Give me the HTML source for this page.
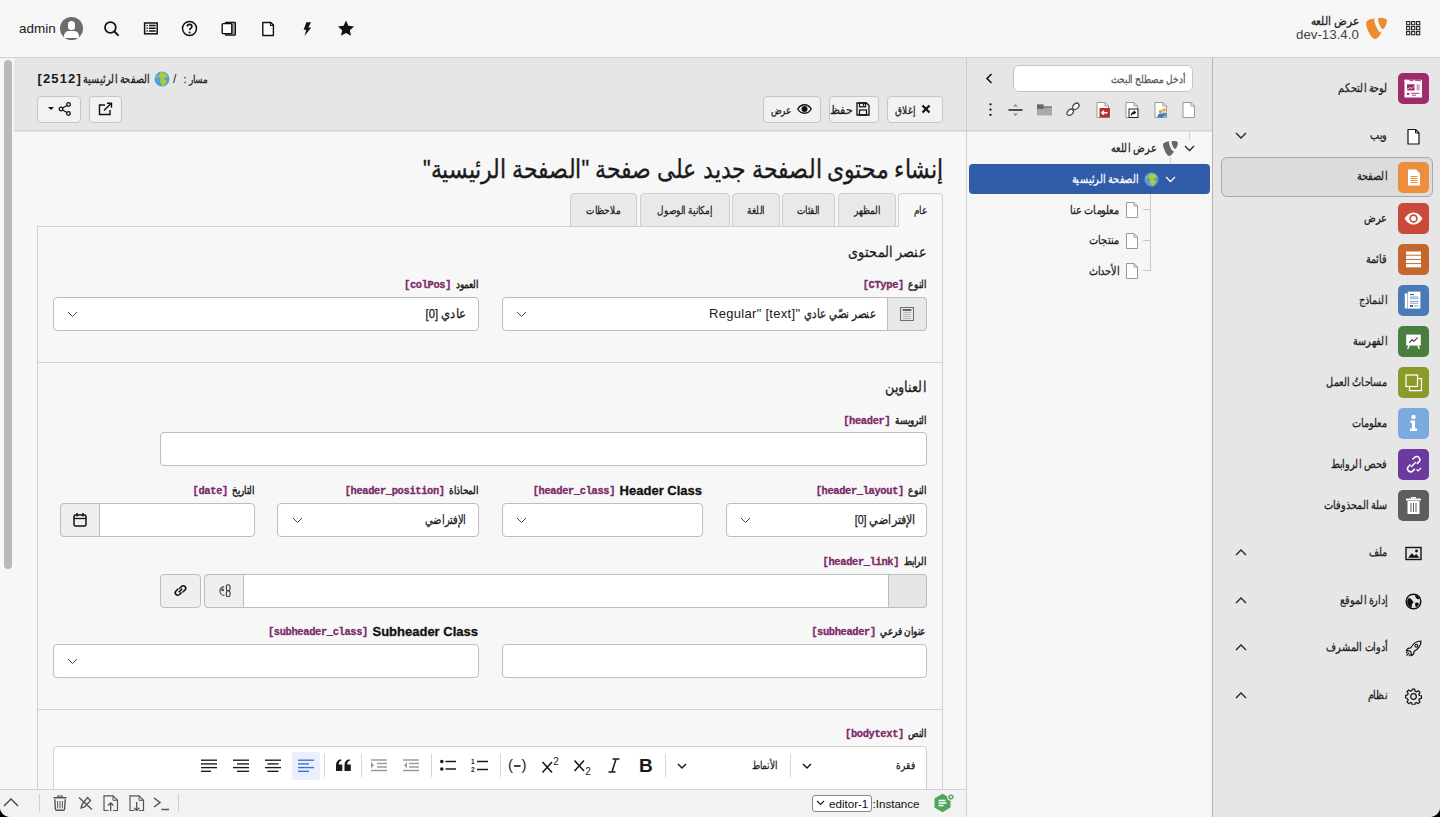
<!DOCTYPE html>
<html lang="ar" dir="rtl">
<head>
<meta charset="utf-8">
<style>
*{box-sizing:border-box;margin:0;padding:0}
html,body{width:1440px;height:817px;overflow:hidden;background:#000;font-family:"Liberation Sans",sans-serif;color:#1a1a1a}
#app{position:absolute;left:0;top:0;width:1440px;height:817px;background:#f7f7f7;border-radius:0 0 10px 10px;overflow:hidden}
.a{position:absolute}
svg{display:block;direction:ltr}
.t{white-space:nowrap;transform-origin:100% 50%;-webkit-text-stroke-width:.25px}
.tl{white-space:nowrap;direction:ltr}
</style>
</head>
<body>
<div id="app">
<div class="a" style="left:0px;top:0px;width:1440px;height:57px;background:#f6f6f6"></div>
<div class="a" style="left:0px;top:57px;width:1440px;height:1px;background:#d4d4d4"></div>
<div class="a" style="left:0px;top:58px;width:1440px;height:1px;background:rgba(0,0,0,.04)"></div>
<div class="a" style="left:1212px;top:58px;width:228px;height:759px;background:#e6e6e6"></div>
<div class="a" style="left:1212px;top:58px;width:1px;height:759px;background:#b4b4b4"></div>
<div class="a" style="left:967px;top:58px;width:245px;height:759px;background:#f6f6f6"></div>
<div class="a" style="left:967px;top:58px;width:245px;height:72px;background:#e6e6e6"></div>
<div class="a" style="left:967px;top:130px;width:245px;height:1px;background:#d3d3d3"></div>
<div class="a" style="left:967px;top:131px;width:245px;height:1px;background:#e2e2e2"></div>
<div class="a" style="left:966px;top:58px;width:1px;height:759px;background:#d0d0d0"></div>
<div class="a" style="left:14px;top:58px;width:952px;height:72px;background:#e6e6e6"></div>
<div class="a" style="left:14px;top:130px;width:952px;height:1px;background:#d3d3d3"></div>
<div class="a" style="left:14px;top:131px;width:952px;height:1px;background:#e2e2e2"></div>
<div class="a tl" style="left:19px;top:20.0px;line-height:18px;font-size:13.5px;font-weight:normal;color:#1a1a1a;">admin</div>
<div class="a" style="left:60px;top:17px;width:23px;height:23px;border-radius:50%;background:#6b6b6b;overflow:hidden"><div class="a" style="left:8px;top:4px;width:7px;height:9px;border-radius:3.5px 3.5px 3px 3px;background:#fff"></div><div class="a" style="left:4px;top:13.5px;width:15px;height:7px;border-radius:5px 5px 0 0;background:#fff"></div></div>
<svg class="a" style="left:103px;top:20px;" width="17" height="17" viewBox="0 0 17 17"><circle cx="7.4" cy="7.5" r="5.4" fill="none" stroke="#111" stroke-width="1.7"/><path d="M11.3 11.4L15 15.1" stroke="#111" stroke-width="2" stroke-linecap="round"/></svg>
<svg class="a" style="left:143px;top:22px;" width="16" height="13" viewBox="0 0 16 13"><rect x="1.6" y="1" width="12.6" height="10.8" fill="none" stroke="#111" stroke-width="1.5"/><path d="M3.5 3.6h1.2M3.5 6.3h1.2M3.5 9h1.2" stroke="#111" stroke-width="1.4"/><path d="M6 3.6h6.6M6 6.3h6.6M6 9h6.6" stroke="#111" stroke-width="1.5"/></svg>
<svg class="a" style="left:181px;top:20px;" width="17" height="17" viewBox="0 0 17 17"><circle cx="8.5" cy="8.5" r="7" fill="none" stroke="#111" stroke-width="1.5"/><path d="M6.3 6.6c0-1.4 1-2.3 2.3-2.3s2.3.9 2.3 2.1c0 1.6-2.2 1.8-2.2 3.6" fill="none" stroke="#111" stroke-width="1.7"/><circle cx="8.6" cy="12.6" r="1" fill="#111"/></svg>
<svg class="a" style="left:221px;top:21px;" width="16" height="16" viewBox="0 0 16 16"><rect x="4.4" y="1.4" width="10" height="12.8" rx=".8" fill="#9a9a9a" stroke="#111" stroke-width="1.2"/><rect x="1.2" y="2.6" width="9.6" height="10" rx=".8" fill="#fff" stroke="#111" stroke-width="1.4"/></svg>
<svg class="a" style="left:260px;top:21px;" width="16" height="16" viewBox="0 0 16 16"><path d="M2.8 1.5h8l2.6 2.6v10.4H2.8z" fill="#fff" stroke="#111" stroke-width="1.4" stroke-linejoin="round"/><path d="M10.5 1.5v3h3" fill="none" stroke="#111" stroke-width="1.1"/></svg>
<svg class="a" style="left:299px;top:21px;" width="16" height="16" viewBox="0 0 16 16"><path d="M7.4 1.2h4.6L9.3 6.4h3l-6.8 8.6 1.8-6.3H4.6z" fill="#111"/></svg>
<svg class="a" style="left:337px;top:20px;" width="18" height="17" viewBox="0 0 18 17"><path d="M9 .6l2.4 5.2 5.7.6-4.3 3.8 1.2 5.6L9 12.9l-5 2.9 1.2-5.6L.9 6.4l5.7-.6z" fill="#111"/></svg>
<div class="a t" style="right:81px;top:13.5px;line-height:14px;font-size:11.5px;font-weight:normal;color:#1a1a1a;transform:scaleX(0.88);">عرض اللعه</div>
<div class="a tl" style="left:1296px;top:27.0px;line-height:16px;font-size:13.3px;font-weight:normal;color:#444;">dev-13.4.0</div>
<svg class="a" style="left:1366px;top:18px;" width="21" height="21" viewBox="0 0 24 24"><path d="M18.08 16.539c-.356.105-.64.144-1.012.144-3.048 0-7.524-10.652-7.524-14.197 0-1.305.31-1.74.745-2.114C6.56.808 2.082 2.177.651 3.917c-.31.436-.497 1.12-.497 1.99C.154 11.436 6.06 24 10.228 24c1.928 0 5.178-3.168 7.852-7.46M16.134.001c3.855 0 7.712.622 7.712 2.798 0 4.415-2.8 9.765-4.23 9.765-2.549 0-5.72-7.09-5.72-10.635C13.897.311 14.518 0 16.134 0" fill="#ee8b2b"/></svg>
<svg class="a" style="left:1406px;top:21px;" width="16" height="15" viewBox="0 0 16 15"><rect x="0.6" y="0.6" width="3.2" height="3.2" fill="none" stroke="#111" stroke-width="1"/><rect x="5.6" y="0.6" width="3.2" height="3.2" fill="none" stroke="#111" stroke-width="1"/><rect x="10.6" y="0.6" width="3.2" height="3.2" fill="none" stroke="#111" stroke-width="1"/><rect x="0.6" y="5.6" width="3.2" height="3.2" fill="none" stroke="#111" stroke-width="1"/><rect x="5.6" y="5.6" width="3.2" height="3.2" fill="none" stroke="#111" stroke-width="1"/><rect x="10.6" y="5.6" width="3.2" height="3.2" fill="none" stroke="#111" stroke-width="1"/><rect x="0.6" y="10.6" width="3.2" height="3.2" fill="none" stroke="#111" stroke-width="1"/><rect x="5.6" y="10.6" width="3.2" height="3.2" fill="none" stroke="#111" stroke-width="1"/><rect x="10.6" y="10.6" width="3.2" height="3.2" fill="none" stroke="#111" stroke-width="1"/></svg>
<div class="a" style="left:1221px;top:157px;width:212px;height:40px;border:1px solid #a9a9a9;border-radius:6px;background:#dcdcdc;box-sizing:border-box"></div>
<div class="a" style="left:1398px;top:73.0px;width:31px;height:31px;border-radius:5px;background:#9e2c6b"><svg width="31" height="31" viewBox="0 0 31 31"><rect x="6.5" y="6.8" width="17.5" height="17.7" fill="#fff"/><path d="M6.5 6.8h4.5v1.6H6.5z" fill="#fff"/><path d="M11.5 7.6h4M17 7.6h6" stroke="#9e2c6b" stroke-width=".9"/><rect x="9" y="11.3" width="7.5" height="6.2" fill="#9e2c6b"/><path d="M9 16.5l3-2 2 1 2.5-2.5" fill="none" stroke="#e9b8d2" stroke-width="1"/><rect x="18.5" y="11.3" width="3.2" height="6.2" fill="#d9a3c1"/><rect x="9" y="19.8" width="2.2" height="2.2" fill="#9e2c6b"/><path d="M13 20.3h8.5M14 22.2h4" stroke="#9e2c6b" stroke-width=".9"/></svg></div>
<div class="a t" style="right:53px;top:77.5px;line-height:20px;font-size:11.5px;font-weight:normal;color:#1a1a1a;transform:scaleX(0.81);">لوحة التحكم</div>
<div class="a" style="left:1398px;top:161.5px;width:31px;height:31px;border-radius:5px;background:#eb8f3f"><svg width="31" height="31" viewBox="0 0 31 31"><path d="M10 7.5h8l4 4v12H10z" fill="#fff"/><path d="M12.5 14.5h7M12.5 16.5h7M12.5 18.5h7M12.5 20.5h7" stroke="#eb8f3f" stroke-width="1"/></svg></div>
<div class="a t" style="right:53px;top:166.0px;line-height:20px;font-size:11.5px;font-weight:normal;color:#1a1a1a;transform:scaleX(0.81);">الصفحة</div>
<div class="a" style="left:1398px;top:203.0px;width:31px;height:31px;border-radius:5px;background:#c94a3a"><svg width="31" height="31" viewBox="0 0 31 31"><path d="M6.5 15.5c2.5-4 5.5-6 9-6s6.5 2 9 6c-2.5 4-5.5 6-9 6s-6.5-2-9-6z" fill="#fff"/><circle cx="15.5" cy="15.5" r="4.2" fill="#c94a3a"/><circle cx="15.5" cy="15.5" r="2.6" fill="#fff"/></svg></div>
<div class="a t" style="right:53px;top:207.5px;line-height:20px;font-size:11.5px;font-weight:normal;color:#1a1a1a;transform:scaleX(0.81);">عرض</div>
<div class="a" style="left:1398px;top:244.0px;width:31px;height:31px;border-radius:5px;background:#c4672f"><svg width="31" height="31" viewBox="0 0 31 31"><rect x="8" y="7.5" width="15" height="3.2" fill="#fff"/><rect x="8" y="11.7" width="15" height="3.2" fill="#fff"/><rect x="8" y="15.9" width="15" height="3.2" fill="#fff"/><rect x="8" y="20.1" width="15" height="3.2" fill="#fff"/></svg></div>
<div class="a t" style="right:53px;top:248.5px;line-height:20px;font-size:11.5px;font-weight:normal;color:#1a1a1a;transform:scaleX(0.81);">قائمة</div>
<div class="a" style="left:1398px;top:285.0px;width:31px;height:31px;border-radius:5px;background:#4a7bb6"><svg width="31" height="31" viewBox="0 0 31 31"><rect x="6.8" y="8.5" width="2.6" height="15" fill="#fff"/><rect x="9.8" y="6.6" width="12.6" height="17" fill="#fff"/><path d="M12 9.6h4" stroke="#2d4e7a" stroke-width="1"/><rect x="12" y="11.3" width="8.5" height="3" fill="#a9c4e4"/><path d="M12 16.4h8.5M12 18.2h8.5" stroke="#6b93c6" stroke-width=".8"/><rect x="12" y="20.1" width="3" height="1.7" fill="#2d4e7a"/><rect x="16" y="20.1" width="4.5" height="1.7" fill="#b9cfe8"/></svg></div>
<div class="a t" style="right:53px;top:289.5px;line-height:20px;font-size:11.5px;font-weight:normal;color:#1a1a1a;transform:scaleX(0.81);">النماذج</div>
<div class="a" style="left:1398px;top:326.0px;width:31px;height:31px;border-radius:5px;background:#4b7d3e"><svg width="31" height="31" viewBox="0 0 31 31"><rect x="8.2" y="8.6" width="14.6" height="11" fill="#fff"/><path d="M11.3 16.6l2.8-2.8 1.8 1.5 3.6-3.6" fill="none" stroke="#333" stroke-width="1.1"/><path d="M11.2 19.5l-1.6 3.4M19.8 19.5l1.6 3.4" stroke="#fff" stroke-width="1.3"/></svg></div>
<div class="a t" style="right:53px;top:330.5px;line-height:20px;font-size:11.5px;font-weight:normal;color:#1a1a1a;transform:scaleX(0.81);">الفهرسة</div>
<div class="a" style="left:1398px;top:367.0px;width:31px;height:31px;border-radius:5px;background:#8c9a2a"><svg width="31" height="31" viewBox="0 0 31 31"><rect x="8" y="8" width="11.5" height="11.5" fill="none" stroke="#fff" stroke-width="1.25"/><path d="M11.5 19.5v4h12v-12h-4" fill="none" stroke="#fff" stroke-width="1.25"/></svg></div>
<div class="a t" style="right:53px;top:371.5px;line-height:20px;font-size:11.5px;font-weight:normal;color:#1a1a1a;transform:scaleX(0.81);">مساحاتُ العمل</div>
<div class="a" style="left:1398px;top:408.0px;width:31px;height:31px;border-radius:5px;background:#7aaade"><svg width="31" height="31" viewBox="0 0 31 31"><circle cx="15.5" cy="9" r="2.2" fill="#fff"/><path d="M12.5 12.5h4.5v8h2v2.5h-7v-2.5h2v-5.5h-1.5z" fill="#fff"/></svg></div>
<div class="a t" style="right:53px;top:412.5px;line-height:20px;font-size:11.5px;font-weight:normal;color:#1a1a1a;transform:scaleX(0.81);">معلومات</div>
<div class="a" style="left:1398px;top:449.0px;width:31px;height:31px;border-radius:5px;background:#6b3a9f"><svg width="31" height="31" viewBox="0 0 31 31"><path d="M14.5 10.5l2-2c1.2-1.2 3.2-1.2 4.4 0s1.2 3.2 0 4.4l-2 2M12.5 15.5l-2 2c-1.2 1.2-1.2 3.2 0 4.4s3.2 1.2 4.4 0l2-2M13 18l5-5" fill="none" stroke="#fff" stroke-width="1.5"/><path d="M18.5 20.5l1.5 1.5 3-3" fill="none" stroke="#fff" stroke-width="1.2"/></svg></div>
<div class="a t" style="right:53px;top:453.5px;line-height:20px;font-size:11.5px;font-weight:normal;color:#1a1a1a;transform:scaleX(0.81);">فحص الروابط</div>
<div class="a" style="left:1398px;top:490.0px;width:31px;height:31px;border-radius:5px;background:#5b5e5c"><svg width="31" height="31" viewBox="0 0 31 31"><rect x="9.5" y="11" width="12" height="13" fill="#fff"/><rect x="8" y="8.5" width="15" height="2" fill="#fff"/><rect x="13" y="7" width="5" height="1.5" fill="#fff"/><path d="M13 13v9M15.5 13v9M18 13v9" stroke="#5b5e5c" stroke-width="1"/></svg></div>
<div class="a t" style="right:53px;top:494.5px;line-height:20px;font-size:11.5px;font-weight:normal;color:#1a1a1a;transform:scaleX(0.81);">سلة المحذوفات</div>
<svg class="a" style="left:1405px;top:127.5px;" width="17" height="17" viewBox="0 0 17 17"><path d="M3 1.5h7.5l3.5 3.5v11h-11z" fill="#fff" stroke="#111" stroke-width="1.2" stroke-linejoin="round"/><path d="M10.5 1.5V5h3.5" fill="none" stroke="#111" stroke-width="1"/></svg>
<div class="a t" style="right:53px;top:124.5px;line-height:20px;font-size:11.5px;font-weight:normal;color:#1a1a1a;transform:scaleX(0.81);">ويب</div>
<svg class="a" style="left:1235px;top:132px;" width="12" height="8" viewBox="0 0 12 8"><path d="M1 1l5 5 5-5" fill="none" stroke="#222" stroke-width="1.3"/></svg>
<svg class="a" style="left:1405px;top:544.5px;" width="17" height="17" viewBox="0 0 17 17"><rect x="1" y="2.5" width="15" height="12" fill="none" stroke="#111" stroke-width="1.4"/><path d="M3 12.8l3.8-4.6 2.6 2.6 1.8-1.8 3.3 3.8z" fill="#111"/><circle cx="11.5" cy="6" r="1.4" fill="#111"/></svg>
<div class="a t" style="right:53px;top:541.5px;line-height:20px;font-size:11.5px;font-weight:normal;color:#1a1a1a;transform:scaleX(0.81);">ملف</div>
<svg class="a" style="left:1235px;top:549px;" width="12" height="8" viewBox="0 0 12 8"><path d="M1 6l5-5 5 5" fill="none" stroke="#222" stroke-width="1.3"/></svg>
<svg class="a" style="left:1405px;top:592.5px;" width="17" height="17" viewBox="0 0 17 17"><circle cx="8.5" cy="8.5" r="7.3" fill="none" stroke="#111" stroke-width="1.5"/><path d="M3.2 5.5c1.5-.6 3 .2 3.5 1.3.6 1.2 2 1.3 1.6 2.8-.4 1.3-1.8 1.2-1.5 2.8.2 1.2-.2 2.3-.8 2.6C4.6 14 3.3 12.5 2.6 11 2 9.5 2 7.3 3.2 5.5zM10 2c1.8.4 3.8 1.7 4.6 3.8-1.1.8-2.6.5-3.3-.6-.6-.9-1.5-1.8-1.3-3.2zM10.5 9.5c1.3-.3 2.8.2 3.5 1.3-.5 1.6-1.6 2.8-3 3.5-.6-.8-1.3-2.6-.5-4.8z" fill="#111"/></svg>
<div class="a t" style="right:53px;top:589.5px;line-height:20px;font-size:11.5px;font-weight:normal;color:#1a1a1a;transform:scaleX(0.81);">إدارة الموقع</div>
<svg class="a" style="left:1235px;top:597px;" width="12" height="8" viewBox="0 0 12 8"><path d="M1 6l5-5 5 5" fill="none" stroke="#222" stroke-width="1.3"/></svg>
<svg class="a" style="left:1405px;top:639.5px;" width="17" height="17" viewBox="0 0 17 17"><path d="M16 1c-4.5 0-8 2.8-10.2 6.8l-2.8.6L1.3 10.6l3.4.3 1.4 1.4.3 3.4 2.2-1.7.6-2.8C13.2 9 16 5.5 16 1z" fill="none" stroke="#111" stroke-width="1.2" stroke-linejoin="round"/><circle cx="11.3" cy="5.7" r="1.4" fill="none" stroke="#111" stroke-width="1.1"/><path d="M4 13l-2.5 2.5M5.5 14.5l-1.5 1.5M2.5 11.5L1 13" stroke="#111" stroke-width="1.1"/></svg>
<div class="a t" style="right:53px;top:636.5px;line-height:20px;font-size:11.5px;font-weight:normal;color:#1a1a1a;transform:scaleX(0.81);">أدوات المشرف</div>
<svg class="a" style="left:1235px;top:644px;" width="12" height="8" viewBox="0 0 12 8"><path d="M1 6l5-5 5 5" fill="none" stroke="#222" stroke-width="1.3"/></svg>
<svg class="a" style="left:1405px;top:687.5px;" width="17" height="17" viewBox="0 0 17 17"><path d="M7.3 1.2h2.4l.45 2.1 1.35.55 1.8-1.2 1.7 1.7-1.2 1.8.55 1.35 2.1.45v2.4l-2.1.45-.55 1.35 1.2 1.8-1.7 1.7-1.8-1.2-1.35.55-.45 2.1H7.3l-.45-2.1-1.35-.55-1.8 1.2-1.7-1.7 1.2-1.8-.55-1.35L.55 9.7V7.3l2.1-.45.55-1.35-1.2-1.8 1.7-1.7 1.8 1.2 1.35-.55z" fill="none" stroke="#111" stroke-width="1.2" stroke-linejoin="round"/><circle cx="8.5" cy="8.5" r="2.8" fill="none" stroke="#111" stroke-width="1.2"/></svg>
<div class="a t" style="right:53px;top:684.5px;line-height:20px;font-size:11.5px;font-weight:normal;color:#1a1a1a;transform:scaleX(0.81);">نظام</div>
<svg class="a" style="left:1235px;top:692px;" width="12" height="8" viewBox="0 0 12 8"><path d="M1 6l5-5 5 5" fill="none" stroke="#222" stroke-width="1.3"/></svg>
<div class="a" style="left:1013px;top:64.5px;width:180px;height:27.5px;background:#fff;border:1px solid #c4c4c4;border-radius:6px;box-sizing:border-box"></div>
<div class="a t" style="right:255px;top:68.5px;line-height:20px;font-size:11px;font-weight:normal;color:#555;transform:scaleX(0.81);">أدخل مصطلح البحث</div>
<svg class="a" style="left:985px;top:73px;" width="8" height="11" viewBox="0 0 8 11"><path d="M6.5 1L2 5.5 6.5 10" fill="none" stroke="#111" stroke-width="1.6"/></svg>
<svg class="a" style="left:988px;top:102px;" width="5" height="15" viewBox="0 0 5 15"><circle cx="2.5" cy="2.3" r="1.15" fill="#111"/><circle cx="2.5" cy="7.6" r="1.15" fill="#111"/><circle cx="2.5" cy="12.9" r="1.15" fill="#111"/></svg>
<svg class="a" style="left:1008px;top:102px;" width="15" height="16" viewBox="0 0 15 16"><path d="M.5 8h14" stroke="#333" stroke-width="1.7"/><path d="M5 4.5L7.5 2 10 4.5zM5 11.5l2.5 2.5 2.5-2.5z" fill="#888"/></svg>
<svg class="a" style="left:1037px;top:104px;" width="16" height="12" viewBox="0 0 16 12"><rect x="0" y="2.6" width="15" height="8.9" fill="#a9a9a9"/><rect x="0" y="0.3" width="6.6" height="4.7" fill="#6e6e6e"/><path d="M0 3h15" stroke="#5e5e5e" stroke-width="1"/></svg>
<svg class="a" style="left:1066px;top:102px;" width="15" height="15" viewBox="0 0 15 15"><ellipse cx="4.2" cy="10.3" rx="3.6" ry="2.6" transform="rotate(-45 4.2 10.3)" fill="#fff" stroke="#444" stroke-width="1.3"/><ellipse cx="9.8" cy="4.3" rx="3.6" ry="2.6" transform="rotate(-45 9.8 4.3)" fill="#fff" stroke="#444" stroke-width="1.3"/></svg>
<svg class="a" style="left:1096px;top:102px;" width="14" height="16" viewBox="0 0 14 16"><path d="M1 .5h8l3.5 3.5v11.5H1z" fill="#fff" stroke="#999" stroke-width="1"/><path d="M9 .5V4h3.5" fill="none" stroke="#999" stroke-width="1"/><rect x="3.5" y="6" width="10.5" height="9.5" fill="#c0302a"/><path d="M5.5 10.7h6M5.5 10.7l2.5-2M5.5 10.7l2.5 2" stroke="#fff" stroke-width="1.4"/></svg>
<svg class="a" style="left:1125px;top:102px;" width="14" height="16" viewBox="0 0 14 16"><path d="M1 .5h8l3.5 3.5v11.5H1z" fill="#fff" stroke="#999" stroke-width="1"/><path d="M9 .5V4h3.5" fill="none" stroke="#999" stroke-width="1"/><rect x="4" y="7" width="9" height="8.5" fill="#fff" stroke="#222" stroke-width="1"/><path d="M6.5 13.5c0-2 1-3 3-3M8.5 9l1.8 1.5-1.8 1.5" fill="none" stroke="#111" stroke-width="1.3"/></svg>
<svg class="a" style="left:1154px;top:102px;" width="14" height="16" viewBox="0 0 14 16"><path d="M1 .5h8l3.5 3.5v11.5H1z" fill="#fff" stroke="#999" stroke-width="1"/><path d="M9 .5V4h3.5" fill="none" stroke="#999" stroke-width="1"/><circle cx="10" cy="8" r="1.8" fill="#e2a33b"/><path d="M7 14.5c0-2.5 1.2-4 3-4s3 1.5 3 4z" fill="#4a8fd4"/><circle cx="6.5" cy="9.5" r="1.8" fill="#e2a33b"/><path d="M3.5 15.5c0-2.5 1.2-4 3-4s3 1.5 3 4z" fill="#3b7ac0"/></svg>
<svg class="a" style="left:1182px;top:102px;" width="14" height="16" viewBox="0 0 14 16"><path d="M1 .5h8l3.5 3.5v11.5H1z" fill="#fff" stroke="#999" stroke-width="1"/><path d="M9 .5V4h3.5" fill="none" stroke="#999" stroke-width="1"/></svg>
<div class="a" style="left:1189px;top:131px;width:1px;height:9px;background:#d0d0d0"></div>
<div class="a" style="left:1150px;top:194px;width:1px;height:77px;background:#c9c9c9"></div>
<div class="a" style="left:1143px;top:209px;width:8px;height:1px;background:#c9c9c9"></div>
<div class="a" style="left:1143px;top:240px;width:8px;height:1px;background:#c9c9c9"></div>
<div class="a" style="left:1143px;top:270px;width:8px;height:1px;background:#c9c9c9"></div>
<svg class="a" style="left:1184px;top:145px;" width="11" height="7" viewBox="0 0 11 7"><path d="M1 1l4.5 4.5L10 1" fill="none" stroke="#222" stroke-width="1.3"/></svg>
<svg class="a" style="left:1163px;top:141px;" width="15" height="15" viewBox="0 0 24 24"><path d="M18.08 16.539c-.356.105-.64.144-1.012.144-3.048 0-7.524-10.652-7.524-14.197 0-1.305.31-1.74.745-2.114C6.56.808 2.082 2.177.651 3.917c-.31.436-.497 1.12-.497 1.99C.154 11.436 6.06 24 10.228 24c1.928 0 5.178-3.168 7.852-7.46M16.134.001c3.855 0 7.712.622 7.712 2.798 0 4.415-2.8 9.765-4.23 9.765-2.549 0-5.72-7.09-5.72-10.635C13.897.311 14.518 0 16.134 0" fill="#666"/></svg>
<div class="a t" style="right:284px;top:138.0px;line-height:20px;font-size:11.5px;font-weight:normal;color:#1a1a1a;transform:scaleX(0.81);">عرض اللعه</div>
<div class="a" style="left:969px;top:164px;width:241px;height:30px;background:#2f5ba9;border-radius:4px"></div>
<div class="a" style="left:1170px;top:157px;width:1px;height:7px;background:#d0d0d0"></div>
<svg class="a" style="left:1165px;top:176px;" width="11" height="7" viewBox="0 0 11 7"><path d="M1 1l4.5 4.5L10 1" fill="none" stroke="#fff" stroke-width="1.3"/></svg>
<svg class="a" style="left:1144px;top:172px;" width="15" height="15" viewBox="0 0 15 15"><circle cx="7.5" cy="7.5" r="7" fill="#5b9bd8"/><path d="M6.5 1.2c2.3 0 4.6 1 5.9 2.7.4 1 .2 2-.6 2.3-.9.3-1.9-.3-2.5.3-.5.6.3 1.4 1.1 1.6 1 .3 1.6 1 1.3 2-.4 1.3-1.5 2.2-2.2 3.3-.4.7-1 1.3-1.6 1.1-.5-.3-.4-1.2-.6-1.9-.3-1-1.2-1.6-1.4-2.6-.2-1.2.7-2 .3-3-.3-.9-1.6-1-2-1.9-.4-.9.5-1.9 1.4-2.3.3-.6.5-1.2.9-1.6z" fill="#a9cf38"/><path d="M1.5 5c.6-.6 1.4-.6 1.8 0 .3.6-.2 1.3-.9 1.5-.5.1-.9-.3-.9-.8z" fill="#a9cf38"/></svg>
<div class="a t" style="right:302px;top:169.0px;line-height:20px;font-size:11.5px;font-weight:normal;color:#fff;transform:scaleX(0.81);">الصفحة الرئيسية</div>
<svg class="a" style="left:1125px;top:202.0px;" width="14" height="16" viewBox="0 0 14 16"><path d="M1.5 .5h7.5l3.5 3.5v11.5h-11z" fill="#fff" stroke="#999" stroke-width="1"/><path d="M9 .5V4h3.5" fill="none" stroke="#999" stroke-width="1"/></svg>
<div class="a t" style="right:321px;top:199.5px;line-height:20px;font-size:11.5px;font-weight:normal;color:#1a1a1a;transform:scaleX(0.81);">معلومات عنا</div>
<svg class="a" style="left:1125px;top:232.5px;" width="14" height="16" viewBox="0 0 14 16"><path d="M1.5 .5h7.5l3.5 3.5v11.5h-11z" fill="#fff" stroke="#999" stroke-width="1"/><path d="M9 .5V4h3.5" fill="none" stroke="#999" stroke-width="1"/></svg>
<div class="a t" style="right:321px;top:230.0px;line-height:20px;font-size:11.5px;font-weight:normal;color:#1a1a1a;transform:scaleX(0.81);">منتجات</div>
<svg class="a" style="left:1125px;top:263.0px;" width="14" height="16" viewBox="0 0 14 16"><path d="M1.5 .5h7.5l3.5 3.5v11.5h-11z" fill="#fff" stroke="#999" stroke-width="1"/><path d="M9 .5V4h3.5" fill="none" stroke="#999" stroke-width="1"/></svg>
<div class="a t" style="right:321px;top:260.5px;line-height:20px;font-size:11.5px;font-weight:normal;color:#1a1a1a;transform:scaleX(0.81);">الأحداث</div>
<div class="a" style="left:4px;top:60px;width:7.5px;height:509px;border-radius:4px;background:#b9b9b9"></div>
<div class="a tl" style="left:37.5px;top:71.0px;line-height:16px;font-size:13px;font-weight:bold;color:#1a1a1a;letter-spacing:1.15px;">[2512]</div>
<div class="a t" style="right:1291px;top:69.0px;line-height:20px;font-size:11.5px;font-weight:normal;color:#1a1a1a;transform:scaleX(0.8);">الصفحة الرئيسية</div>
<svg class="a" style="left:154px;top:71px;" width="16" height="16" viewBox="0 0 15 15"><circle cx="7.5" cy="7.5" r="7" fill="#5b9bd8"/><path d="M6.5 1.2c2.3 0 4.6 1 5.9 2.7.4 1 .2 2-.6 2.3-.9.3-1.9-.3-2.5.3-.5.6.3 1.4 1.1 1.6 1 .3 1.6 1 1.3 2-.4 1.3-1.5 2.2-2.2 3.3-.4.7-1 1.3-1.6 1.1-.5-.3-.4-1.2-.6-1.9-.3-1-1.2-1.6-1.4-2.6-.2-1.2.7-2 .3-3-.3-.9-1.6-1-2-1.9-.4-.9.5-1.9 1.4-2.3.3-.6.5-1.2.9-1.6z" fill="#a9cf38"/><path d="M1.5 5c.6-.6 1.4-.6 1.8 0 .3.6-.2 1.3-.9 1.5-.5.1-.9-.3-.9-.8z" fill="#a9cf38"/></svg>
<div class="a tl" style="left:173px;top:71.0px;line-height:16px;font-size:12px;font-weight:normal;color:#1a1a1a;">/</div>
<div class="a t" style="right:1232px;top:69.0px;line-height:20px;font-size:11px;font-weight:normal;color:#1a1a1a;transform:scaleX(0.81);">مسار :</div>
<div class="a" style="left:37px;top:96px;width:44px;height:27px;border:1px solid #c6c6c6;border-radius:4px;background:#f2f2f2;box-sizing:border-box"></div>
<svg class="a" style="left:48px;top:102px;" width="24" height="14" viewBox="0 0 24 14"><path d="M0 5h6L3 8z" fill="#111"/><circle cx="20.5" cy="2.5" r="1.8" fill="none" stroke="#111" stroke-width="1.3"/><circle cx="13" cy="7" r="1.8" fill="none" stroke="#111" stroke-width="1.3"/><circle cx="20.5" cy="11.5" r="1.8" fill="none" stroke="#111" stroke-width="1.3"/><path d="M14.6 6l4.3-2.5M14.6 8l4.3 2.5" stroke="#111" stroke-width="1.2"/></svg>
<div class="a" style="left:89px;top:96px;width:33px;height:27px;border:1px solid #c6c6c6;border-radius:4px;background:#f2f2f2;box-sizing:border-box"></div>
<svg class="a" style="left:98px;top:102px;" width="15" height="14" viewBox="0 0 15 14"><path d="M7 3H1.5v9.5H12V8" fill="none" stroke="#111" stroke-width="1.4"/><path d="M6 8.5l7-7M9 1.2h4.5v4.5" fill="none" stroke="#111" stroke-width="1.4"/></svg>
<div class="a" style="left:887px;top:96px;width:56px;height:27px;border:1px solid #c6c6c6;border-radius:4px;background:#f2f2f2;box-sizing:border-box"></div>
<svg class="a" style="left:921px;top:104px;" width="10" height="10" viewBox="0 0 10 10"><path d="M1.5 1.5l7 7M8.5 1.5l-7 7" stroke="#111" stroke-width="2.2"/></svg>
<div class="a t" style="right:525px;top:99.5px;line-height:20px;font-size:11px;font-weight:normal;color:#1a1a1a;transform:scaleX(0.81);">إغلاق</div>
<div class="a" style="left:829px;top:96px;width:50px;height:27px;border:1px solid #c6c6c6;border-radius:4px;background:#f2f2f2;box-sizing:border-box"></div>
<svg class="a" style="left:856px;top:102px;" width="14" height="14" viewBox="0 0 14 14"><path d="M1 1h9.5L13 3.5V13H1z" fill="none" stroke="#111" stroke-width="1.3"/><rect x="3.5" y="1" width="6" height="3.8" fill="none" stroke="#111" stroke-width="1.2"/><rect x="3.5" y="8" width="7" height="5" fill="none" stroke="#111" stroke-width="1.2"/><path d="M7.5 2v1.8" stroke="#111" stroke-width="1.2"/></svg>
<div class="a t" style="right:588px;top:99.5px;line-height:20px;font-size:11.5px;font-weight:normal;color:#1a1a1a;transform:scaleX(0.9);">حفظ</div>
<div class="a" style="left:763px;top:96px;width:58px;height:27px;border:1px solid #c6c6c6;border-radius:4px;background:#f2f2f2;box-sizing:border-box"></div>
<svg class="a" style="left:797px;top:104px;" width="15" height="10" viewBox="0 0 15 10"><path d="M.8 5C2.5 2 4.8.8 7.5.8S12.5 2 14.2 5C12.5 8 10.2 9.2 7.5 9.2S2.5 8 .8 5z" fill="none" stroke="#111" stroke-width="1.4"/><circle cx="7.5" cy="5" r="3" fill="#111"/></svg>
<div class="a t" style="right:648px;top:99.5px;line-height:20px;font-size:11px;font-weight:normal;color:#1a1a1a;transform:scaleX(0.81);">عرض</div>
<div class="a t" style="right:497px;top:152.0px;line-height:34px;font-size:25.5px;font-weight:normal;color:#1a1a1a;transform:scaleX(0.847);-webkit-text-stroke:.35px #1a1a1a;">إنشاء محتوى الصفحة جديد على صفحة "الصفحة الرئيسية"</div>
<div class="a" style="left:37px;top:226px;width:906px;height:1px;background:#cfcfcf"></div>
<div class="a" style="left:898px;top:193px;width:45px;height:34px;background:#f7f7f7;border:1px solid #cfcfcf;border-bottom-color:#f7f7f7;border-radius:4px 4px 0 0;box-sizing:border-box"></div>
<div class="a t" style="left:898px;width:45px;top:200px;line-height:20px;text-align:center;font-size:11px;transform:scaleX(0.81);transform-origin:50% 50%">عام</div>
<div class="a" style="left:838px;top:193px;width:58px;height:34px;background:#e9e9e9;border:1px solid #cfcfcf;border-radius:4px 4px 0 0;box-sizing:border-box"></div>
<div class="a t" style="left:838px;width:58px;top:200px;line-height:20px;text-align:center;font-size:11px;transform:scaleX(0.81);transform-origin:50% 50%">المظهر</div>
<div class="a" style="left:782px;top:193px;width:53px;height:34px;background:#e9e9e9;border:1px solid #cfcfcf;border-radius:4px 4px 0 0;box-sizing:border-box"></div>
<div class="a t" style="left:782px;width:53px;top:200px;line-height:20px;text-align:center;font-size:11px;transform:scaleX(0.81);transform-origin:50% 50%">الفئات</div>
<div class="a" style="left:732px;top:193px;width:48px;height:34px;background:#e9e9e9;border:1px solid #cfcfcf;border-radius:4px 4px 0 0;box-sizing:border-box"></div>
<div class="a t" style="left:732px;width:48px;top:200px;line-height:20px;text-align:center;font-size:11px;transform:scaleX(0.81);transform-origin:50% 50%">اللغة</div>
<div class="a" style="left:640px;top:193px;width:90px;height:34px;background:#e9e9e9;border:1px solid #cfcfcf;border-radius:4px 4px 0 0;box-sizing:border-box"></div>
<div class="a t" style="left:640px;width:90px;top:200px;line-height:20px;text-align:center;font-size:11px;transform:scaleX(0.81);transform-origin:50% 50%">إمكانية الوصول</div>
<div class="a" style="left:570px;top:193px;width:67px;height:34px;background:#e9e9e9;border:1px solid #cfcfcf;border-radius:4px 4px 0 0;box-sizing:border-box"></div>
<div class="a t" style="left:570px;width:67px;top:200px;line-height:20px;text-align:center;font-size:11px;transform:scaleX(0.81);transform-origin:50% 50%">ملاحظات</div>
<div class="a" style="left:37px;top:227px;width:906px;height:600px;border:1px solid #cfcfcf;border-top:none;box-sizing:border-box"></div>
<div class="a" style="left:38px;top:362px;width:904px;height:1px;background:#d3d3d3"></div>
<div class="a" style="left:38px;top:709px;width:904px;height:1px;background:#d3d3d3"></div>
<div class="a t" style="right:514px;top:241.5px;line-height:20px;font-size:15px;font-weight:normal;color:#1a1a1a;transform:scaleX(0.85);">عنصر المحتوى</div>
<div class="a t" style="right:514px;top:274px;line-height:20px;font-size:10.8px;font-weight:normal;-webkit-text-stroke:.45px #1a1a1a;transform:scaleX(.8)">النوع</div>
<div class="a tl" style="right:536.0999755859375px;top:275px;line-height:20px;font-size:10.4px;letter-spacing:-.35px;font-weight:bold;font-family:'Liberation Mono',monospace;color:#7a2a68;-webkit-text-stroke:.3px #7a2a68;direction:ltr">[CType]</div>
<div class="a t" style="right:962px;top:274px;line-height:20px;font-size:10.8px;font-weight:normal;-webkit-text-stroke:.45px #1a1a1a;transform:scaleX(.8)">العمود</div>
<div class="a tl" style="right:988.8999938964844px;top:275px;line-height:20px;font-size:10.4px;letter-spacing:-.35px;font-weight:bold;font-family:'Liberation Mono',monospace;color:#7a2a68;-webkit-text-stroke:.3px #7a2a68;direction:ltr">[colPos]</div>
<div class="a" style="left:502px;top:297px;width:425px;height:34px;background:#fff;border:1px solid #bdbdbd;border-radius:4px;box-sizing:border-box;"></div>
<div class="a" style="left:887px;top:297px;width:40px;height:34px;background:#e8e8e8;border:1px solid #bdbdbd;border-radius:0 4px 4px 0;box-sizing:border-box"></div>
<svg class="a" style="left:900px;top:307px;" width="14" height="14" viewBox="0 0 14 14"><rect x=".6" y=".6" width="12.8" height="12.8" fill="#fff" stroke="#666" stroke-width="1.1"/><path d="M2.5 3h9" stroke="#111" stroke-width="1.3"/><path d="M2.5 5.2h9M2.5 7.2h9M2.5 9.2h9M2.5 11.2h9" stroke="#888" stroke-width=".8"/></svg>
<div class="a tl" style="left:709px;top:304.0px;line-height:20px;font-size:13px;font-weight:normal;color:#1a1a1a;letter-spacing:.3px;">Regular" [text]"</div>
<div class="a t" style="right:564.5px;top:304.0px;line-height:20px;font-size:12.5px;font-weight:normal;color:#1a1a1a;transform:scaleX(0.79);">عنصر نصّي عادي</div>
<svg class="a" style="left:516px;top:311px;" width="11" height="7" viewBox="0 0 11 7"><path d="M1 1l4.5 4.5L10 1" fill="none" stroke="#444" stroke-width="1"/></svg>
<div class="a" style="left:53px;top:297px;width:426px;height:34px;background:#fff;border:1px solid #bdbdbd;border-radius:4px;box-sizing:border-box;"></div>
<div class="a t" style="right:974px;top:304.0px;line-height:20px;font-size:12.5px;font-weight:normal;color:#1a1a1a;transform:scaleX(0.9);">عادي [0]</div>
<svg class="a" style="left:67px;top:311px;" width="11" height="7" viewBox="0 0 11 7"><path d="M1 1l4.5 4.5L10 1" fill="none" stroke="#444" stroke-width="1"/></svg>
<div class="a t" style="right:514px;top:376.5px;line-height:20px;font-size:15px;font-weight:normal;color:#1a1a1a;transform:scaleX(0.85);">العناوين</div>
<div class="a t" style="right:514px;top:410px;line-height:20px;font-size:10.8px;font-weight:normal;-webkit-text-stroke:.45px #1a1a1a;transform:scaleX(.8)">الترويسة</div>
<div class="a tl" style="right:549.7000122070312px;top:411px;line-height:20px;font-size:10.4px;letter-spacing:-.35px;font-weight:bold;font-family:'Liberation Mono',monospace;color:#7a2a68;-webkit-text-stroke:.3px #7a2a68;direction:ltr">[header]</div>
<div class="a" style="left:160px;top:432px;width:767px;height:34px;background:#fff;border:1px solid #bdbdbd;border-radius:4px;box-sizing:border-box;"></div>
<div class="a t" style="right:514px;top:480px;line-height:20px;font-size:10.8px;font-weight:normal;-webkit-text-stroke:.45px #1a1a1a;transform:scaleX(.8)">النوع</div>
<div class="a tl" style="right:536.0999755859375px;top:481px;line-height:20px;font-size:10.4px;letter-spacing:-.35px;font-weight:bold;font-family:'Liberation Mono',monospace;color:#7a2a68;-webkit-text-stroke:.3px #7a2a68;direction:ltr">[header_layout]</div>
<div class="a tl" style="right:738px;top:481px;line-height:20px;font-size:13px;font-weight:bold;-webkit-text-stroke:.3px #111;color:#111;direction:ltr">Header Class</div>
<div class="a tl" style="right:824.890625px;top:481px;line-height:20px;font-size:10.4px;letter-spacing:-.35px;font-weight:bold;font-family:'Liberation Mono',monospace;color:#7a2a68;-webkit-text-stroke:.3px #7a2a68;direction:ltr">[header_class]</div>
<div class="a t" style="right:962px;top:480px;line-height:20px;font-size:10.8px;font-weight:normal;-webkit-text-stroke:.45px #1a1a1a;transform:scaleX(.8)">المحاذاة</div>
<div class="a tl" style="right:995.2999877929688px;top:481px;line-height:20px;font-size:10.4px;letter-spacing:-.35px;font-weight:bold;font-family:'Liberation Mono',monospace;color:#7a2a68;-webkit-text-stroke:.3px #7a2a68;direction:ltr">[header_position]</div>
<div class="a t" style="right:1186px;top:480px;line-height:20px;font-size:10.8px;font-weight:normal;-webkit-text-stroke:.45px #1a1a1a;transform:scaleX(.8)">التاريخ</div>
<div class="a tl" style="right:1212.1000061035156px;top:481px;line-height:20px;font-size:10.4px;letter-spacing:-.35px;font-weight:bold;font-family:'Liberation Mono',monospace;color:#7a2a68;-webkit-text-stroke:.3px #7a2a68;direction:ltr">[date]</div>
<div class="a" style="left:726px;top:503px;width:201px;height:34px;background:#fff;border:1px solid #bdbdbd;border-radius:4px;box-sizing:border-box;"></div>
<div class="a t" style="right:525px;top:510.0px;line-height:20px;font-size:12.5px;font-weight:normal;color:#1a1a1a;transform:scaleX(0.85);">الإفتراضي [0]</div>
<svg class="a" style="left:740px;top:517px;" width="11" height="7" viewBox="0 0 11 7"><path d="M1 1l4.5 4.5L10 1" fill="none" stroke="#444" stroke-width="1"/></svg>
<div class="a" style="left:502px;top:503px;width:201px;height:34px;background:#fff;border:1px solid #bdbdbd;border-radius:4px;box-sizing:border-box;"></div>
<svg class="a" style="left:516px;top:517px;" width="11" height="7" viewBox="0 0 11 7"><path d="M1 1l4.5 4.5L10 1" fill="none" stroke="#444" stroke-width="1"/></svg>
<div class="a" style="left:277px;top:503px;width:202px;height:34px;background:#fff;border:1px solid #bdbdbd;border-radius:4px;box-sizing:border-box;"></div>
<div class="a t" style="right:974px;top:510.0px;line-height:20px;font-size:12.5px;font-weight:normal;color:#1a1a1a;transform:scaleX(0.76);">الإفتراضي</div>
<svg class="a" style="left:292px;top:517px;" width="11" height="7" viewBox="0 0 11 7"><path d="M1 1l4.5 4.5L10 1" fill="none" stroke="#444" stroke-width="1"/></svg>
<div class="a" style="left:60px;top:503px;width:195px;height:34px;background:#fff;border:1px solid #bdbdbd;border-radius:4px;box-sizing:border-box;"></div>
<div class="a" style="left:60px;top:503px;width:40px;height:34px;background:#efefef;border:1px solid #bdbdbd;border-radius:4px 0 0 4px;box-sizing:border-box"></div>
<svg class="a" style="left:73px;top:512px;" width="14" height="15" viewBox="0 0 14 15"><rect x="1" y="3" width="12" height="11" rx="1.5" fill="none" stroke="#111" stroke-width="1.5"/><path d="M1 6.5h12" stroke="#111" stroke-width="1.3"/><path d="M4 1v3.5M10 1v3.5" stroke="#111" stroke-width="1.5"/></svg>
<div class="a t" style="right:514px;top:551px;line-height:20px;font-size:10.8px;font-weight:normal;-webkit-text-stroke:.45px #1a1a1a;transform:scaleX(.8)">الرابط</div>
<div class="a tl" style="right:540.9000244140625px;top:552px;line-height:20px;font-size:10.4px;letter-spacing:-.35px;font-weight:bold;font-family:'Liberation Mono',monospace;color:#7a2a68;-webkit-text-stroke:.3px #7a2a68;direction:ltr">[header_link]</div>
<div class="a" style="left:204px;top:573.5px;width:723px;height:34px;background:#fff;border:1px solid #bdbdbd;border-radius:4px;box-sizing:border-box;"></div>
<div class="a" style="left:888px;top:573.5px;width:39px;height:34px;background:#e6e6e6;border:1px solid #bdbdbd;border-radius:0 4px 4px 0;box-sizing:border-box"></div>
<div class="a" style="left:204px;top:573.5px;width:40px;height:34px;background:#efefef;border:1px solid #bdbdbd;border-radius:4px 0 0 4px;box-sizing:border-box"></div>
<svg class="a" style="left:217px;top:583px;" width="15" height="16" viewBox="0 0 15 16"><path d="M7.2 3.6A4.4 4.4 0 1 0 7.5 12.4" fill="none" stroke="#333" stroke-width="1.1"/><circle cx="5.6" cy="6.8" r="1.5" fill="#555"/><rect x="9.4" y="1.8" width="3.6" height="6" rx="1.8" fill="none" stroke="#333" stroke-width="1.1"/><rect x="9.4" y="7.8" width="3.6" height="6" rx="1.8" fill="none" stroke="#333" stroke-width="1.1"/></svg>
<div class="a" style="left:160px;top:573.5px;width:41px;height:34px;background:#efefef;border:1px solid #bdbdbd;border-radius:4px;box-sizing:border-box"></div>
<svg class="a" style="left:173px;top:583px;" width="15" height="15" viewBox="0 0 15 15"><path d="M6.2 5.8l2.3-2.3c1-1 2.6-1 3.5 0s1 2.5 0 3.5L9.7 9.3M8.8 9.2L6.5 11.5c-1 1-2.6 1-3.5 0s-1-2.5 0-3.5l2.3-2.3M5.7 9.3l3.6-3.6" fill="none" stroke="#111" stroke-width="1.6"/></svg>
<div class="a t" style="right:514px;top:621px;line-height:20px;font-size:10.8px;font-weight:normal;-webkit-text-stroke:.45px #1a1a1a;transform:scaleX(.8)">عنوان فرعي</div>
<div class="a tl" style="right:564.0999755859375px;top:622px;line-height:20px;font-size:10.4px;letter-spacing:-.35px;font-weight:bold;font-family:'Liberation Mono',monospace;color:#7a2a68;-webkit-text-stroke:.3px #7a2a68;direction:ltr">[subheader]</div>
<div class="a tl" style="right:962px;top:622px;line-height:20px;font-size:13px;font-weight:bold;-webkit-text-stroke:.3px #111;color:#111;direction:ltr">Subheader Class</div>
<div class="a tl" style="right:1072.0px;top:622px;line-height:20px;font-size:10.4px;letter-spacing:-.35px;font-weight:bold;font-family:'Liberation Mono',monospace;color:#7a2a68;-webkit-text-stroke:.3px #7a2a68;direction:ltr">[subheader_class]</div>
<div class="a" style="left:502px;top:644px;width:425px;height:34px;background:#fff;border:1px solid #bdbdbd;border-radius:4px;box-sizing:border-box;"></div>
<div class="a" style="left:53px;top:644px;width:426px;height:34px;background:#fff;border:1px solid #bdbdbd;border-radius:4px;box-sizing:border-box;"></div>
<svg class="a" style="left:67px;top:658px;" width="11" height="7" viewBox="0 0 11 7"><path d="M1 1l4.5 4.5L10 1" fill="none" stroke="#444" stroke-width="1"/></svg>
<div class="a t" style="right:514px;top:723px;line-height:20px;font-size:10.8px;font-weight:normal;-webkit-text-stroke:.45px #1a1a1a;transform:scaleX(.8)">النص</div>
<div class="a tl" style="right:536.0999755859375px;top:724px;line-height:20px;font-size:10.4px;letter-spacing:-.35px;font-weight:bold;font-family:'Liberation Mono',monospace;color:#7a2a68;-webkit-text-stroke:.3px #7a2a68;direction:ltr">[bodytext]</div>
<div class="a" style="left:53px;top:746px;width:874px;height:60px;background:#fff;border:1px solid #cfcfcf;border-radius:4px 4px 0 0;box-sizing:border-box"></div>
<div class="a" style="left:292px;top:752px;width:28px;height:28px;background:#e9f0fb;border-radius:2px"></div>
<svg class="a" style="left:201px;top:758.5px;" width="16" height="14" viewBox="0 0 16 14"><path d="M0 1.2h16" stroke="#1a1a1a" stroke-width="1.35"/><path d="M0 4.9h16" stroke="#1a1a1a" stroke-width="1.35"/><path d="M0 8.6h16" stroke="#1a1a1a" stroke-width="1.35"/><path d="M0 12.3h10" stroke="#1a1a1a" stroke-width="1.35"/></svg>
<svg class="a" style="left:233px;top:758.5px;" width="16" height="14" viewBox="0 0 16 14"><path d="M0 1.2h16" stroke="#1a1a1a" stroke-width="1.35"/><path d="M4 4.9h12" stroke="#1a1a1a" stroke-width="1.35"/><path d="M0 8.6h16" stroke="#1a1a1a" stroke-width="1.35"/><path d="M4 12.3h12" stroke="#1a1a1a" stroke-width="1.35"/></svg>
<svg class="a" style="left:265px;top:758.5px;" width="16" height="14" viewBox="0 0 16 14"><path d="M0 1.2h16" stroke="#1a1a1a" stroke-width="1.35"/><path d="M2.5 4.9h11.0" stroke="#1a1a1a" stroke-width="1.35"/><path d="M0 8.6h16" stroke="#1a1a1a" stroke-width="1.35"/><path d="M2.5 12.3h11.0" stroke="#1a1a1a" stroke-width="1.35"/></svg>
<svg class="a" style="left:298px;top:758.5px;" width="16" height="14" viewBox="0 0 16 14"><path d="M0 1.2h16" stroke="#3a6fd8" stroke-width="1.35"/><path d="M0 4.9h11" stroke="#3a6fd8" stroke-width="1.35"/><path d="M0 8.6h16" stroke="#3a6fd8" stroke-width="1.35"/><path d="M0 12.3h11" stroke="#3a6fd8" stroke-width="1.35"/></svg>
<div class="a" style="left:324px;top:754px;width:1px;height:23px;background:#d6d6d6"></div>
<div class="a" style="left:361px;top:754px;width:1px;height:23px;background:#d6d6d6"></div>
<div class="a" style="left:431px;top:754px;width:1px;height:23px;background:#d6d6d6"></div>
<div class="a" style="left:500px;top:754px;width:1px;height:23px;background:#d6d6d6"></div>
<div class="a" style="left:665px;top:754px;width:1px;height:23px;background:#d6d6d6"></div>
<div class="a" style="left:790px;top:754px;width:1px;height:23px;background:#d6d6d6"></div>
<svg class="a" style="left:336px;top:759px;" width="15" height="12" viewBox="0 0 15 12"><path d="M0 12V6.5C0 3 1.5 1 5 .3l.6 1.3C3.5 2.3 2.8 3.6 2.8 5.5H6.3V12zM8.5 12V6.5c0-3.5 1.5-5.5 5-6.2l.6 1.3c-2.1.7-2.8 2-2.8 3.9h3.5V12z" fill="#1a1a1a"/></svg>
<svg class="a" style="left:371px;top:759px;" width="16" height="13" viewBox="0 0 16 13"><path d="M0 1h16M6 4.5h10M6 8h10M0 11.5h16" stroke="#9a9a9a" stroke-width="1.5"/><path d="M0 3l3 3.2L0 9.4z" fill="#9a9a9a"/></svg>
<svg class="a" style="left:403px;top:759px;" width="16" height="13" viewBox="0 0 16 13"><path d="M0 1h16M6 4.5h10M6 8h10M0 11.5h16" stroke="#9a9a9a" stroke-width="1.5"/><path d="M4 3L1 6.2l3 3.2z" fill="#9a9a9a"/></svg>
<svg class="a" style="left:440px;top:759px;" width="16" height="13" viewBox="0 0 16 13"><circle cx="1.8" cy="2.5" r="1.8" fill="#1a1a1a"/><circle cx="1.8" cy="10" r="1.8" fill="#1a1a1a"/><path d="M5.5 2.5H16M5.5 10H16" stroke="#1a1a1a" stroke-width="1.7"/></svg>
<svg class="a" style="left:471px;top:758px;" width="17" height="15" viewBox="0 0 17 15"><text x="0" y="6" font-size="6.5" font-family="Liberation Sans" font-weight="bold" fill="#1a1a1a">1</text><text x="0" y="14" font-size="6.5" font-family="Liberation Sans" font-weight="bold" fill="#1a1a1a">2</text><path d="M6 3.5H17M6 11.5H17" stroke="#1a1a1a" stroke-width="1.7"/></svg>
<svg class="a" style="left:508px;top:757px;" width="19" height="17" viewBox="0 0 19 17"><text x="0" y="13" font-size="15" font-family="Liberation Sans" fill="#1a1a1a">(</text><text x="13.5" y="13" font-size="15" font-family="Liberation Sans" fill="#1a1a1a">)</text><path d="M6 9h6.5" stroke="#1a1a1a" stroke-width="1.6"/></svg>
<svg class="a" style="left:541px;top:756px;" width="20" height="18" viewBox="0 0 20 18"><path d="M1.5 6l9.5 10.5M11 6L1.5 16.5" stroke="#1a1a1a" stroke-width="1.6"/><text x="12.3" y="9" font-size="10" font-family="Liberation Sans" fill="#1a1a1a">2</text></svg>
<svg class="a" style="left:573px;top:756px;" width="20" height="20" viewBox="0 0 20 20"><path d="M1.5 4.5l9.5 10.5M11 4.5L1.5 15" stroke="#1a1a1a" stroke-width="1.6"/><text x="12.3" y="18.5" font-size="10" font-family="Liberation Sans" fill="#1a1a1a">2</text></svg>
<svg class="a" style="left:608px;top:758px;" width="12" height="15" viewBox="0 0 12 15"><path d="M4.5 1h7M.5 14h7M8 1L4 14" stroke="#1a1a1a" stroke-width="1.5"/></svg>
<div class="a tl" style="left:639px;top:755.0px;line-height:22px;font-size:19px;font-weight:bold;color:#1a1a1a;">B</div>
<svg class="a" style="left:677px;top:763px;" width="10" height="7" viewBox="0 0 10 7"><path d="M1 1l4 4 4-4" fill="none" stroke="#1a1a1a" stroke-width="1.5"/></svg>
<div class="a t" style="right:663px;top:755.0px;line-height:20px;font-size:11px;font-weight:normal;color:#1a1a1a;transform:scaleX(0.81);">الأنماط</div>
<svg class="a" style="left:802px;top:763px;" width="10" height="7" viewBox="0 0 10 7"><path d="M1 1l4 4 4-4" fill="none" stroke="#1a1a1a" stroke-width="1.5"/></svg>
<div class="a t" style="right:525px;top:755.0px;line-height:20px;font-size:11px;font-weight:normal;color:#1a1a1a;transform:scaleX(0.81);">فقرة</div>
<div class="a" style="left:0px;top:789px;width:966px;height:28px;background:#f2f2f2"></div>
<div class="a" style="left:0px;top:789px;width:966px;height:1px;background:#d2d2d2"></div>
<svg class="a" style="left:3px;top:797px;" width="16" height="10" viewBox="0 0 16 10"><path d="M1 9l7-7 7 7" fill="none" stroke="#444" stroke-width="1.4"/></svg>
<div class="a" style="left:39px;top:794px;width:1px;height:18px;background:#cfcfcf"></div>
<div class="a" style="left:178px;top:794px;width:1px;height:18px;background:#cfcfcf"></div>
<svg class="a" style="left:53px;top:795px;" width="14" height="16" viewBox="0 0 14 16"><path d="M.5 2.8h13" stroke="#555" stroke-width="1.5"/><path d="M4.8 2.5V1h4.4v1.5" fill="none" stroke="#555" stroke-width="1.2"/><path d="M1.8 4.3l.6 9.8c0 .8.5 1.2 1.2 1.2h6.8c.7 0 1.2-.4 1.2-1.2l.6-9.8" fill="none" stroke="#555" stroke-width="1.4"/><path d="M4.6 6v7.3M7 6v7.3M9.4 6v7.3" stroke="#555" stroke-width="1"/></svg>
<svg class="a" style="left:78px;top:795px;" width="15" height="16" viewBox="0 0 15 16"><path d="M9.5 2.5l3 3-6 6.5-3.5 1 1-3.5z" fill="none" stroke="#555" stroke-width="1.4"/><path d="M1 2.5l13 12" stroke="#555" stroke-width="1.4"/></svg>
<svg class="a" style="left:103px;top:795px;" width="16" height="16" viewBox="0 0 16 16"><path d="M5.5 15.5H1V.8h9l4.5 4.5v10.2H10" fill="none" stroke="#555" stroke-width="1.2"/><path d="M10 .8v4.5h4.5" fill="none" stroke="#555" stroke-width="1"/><path d="M7.7 16V8M5 10.5l2.7-2.7 2.7 2.7" fill="none" stroke="#555" stroke-width="1.3"/></svg>
<svg class="a" style="left:129px;top:795px;" width="16" height="16" viewBox="0 0 16 16"><path d="M5.5 15.5H1V.8h9l4.5 4.5v10.2H10" fill="none" stroke="#555" stroke-width="1.2"/><path d="M10 .8v4.5h4.5" fill="none" stroke="#555" stroke-width="1"/><path d="M7.7 7v8.5M5 12.8l2.7 2.7 2.7-2.7" fill="none" stroke="#555" stroke-width="1.3"/></svg>
<svg class="a" style="left:153px;top:796px;" width="17" height="15" viewBox="0 0 17 15"><path d="M1 2l6 4.5-6 4.5M8.5 13.5H16" fill="none" stroke="#555" stroke-width="1.5"/></svg>
<div class="a" style="left:812px;top:795px;width:60px;height:17px;border:1px solid #888;border-radius:3px;background:#fff;box-sizing:border-box"></div>
<svg class="a" style="left:816px;top:800px;" width="9" height="6" viewBox="0 0 9 6"><path d="M1 1l3.5 3.5L8 1" fill="none" stroke="#222" stroke-width="1.2"/></svg>
<div class="a tl" style="left:829px;top:795.0px;line-height:17px;font-size:11.6px;font-weight:normal;color:#111;">editor-1</div>
<div class="a tl" style="left:872.5px;top:795.0px;line-height:17px;font-size:11.6px;font-weight:normal;color:#111;">:Instance</div>
<svg class="a" style="left:933px;top:793px;" width="22" height="20" viewBox="0 0 22 20"><path d="M9.5 .8l8 4.6v9.2l-8 4.6-8-4.6V5.4z" fill="#4fa55b"/><path d="M5.5 7.5h7M5.5 10h8M5.5 12.5h5" stroke="#fff" stroke-width="1.3"/><circle cx="18" cy="4" r="3.2" fill="#4fa55b" stroke="#f2f2f2" stroke-width="1.2"/><circle cx="18" cy="4" r="1.1" fill="#fff"/></svg>
</div>
</body>
</html>
